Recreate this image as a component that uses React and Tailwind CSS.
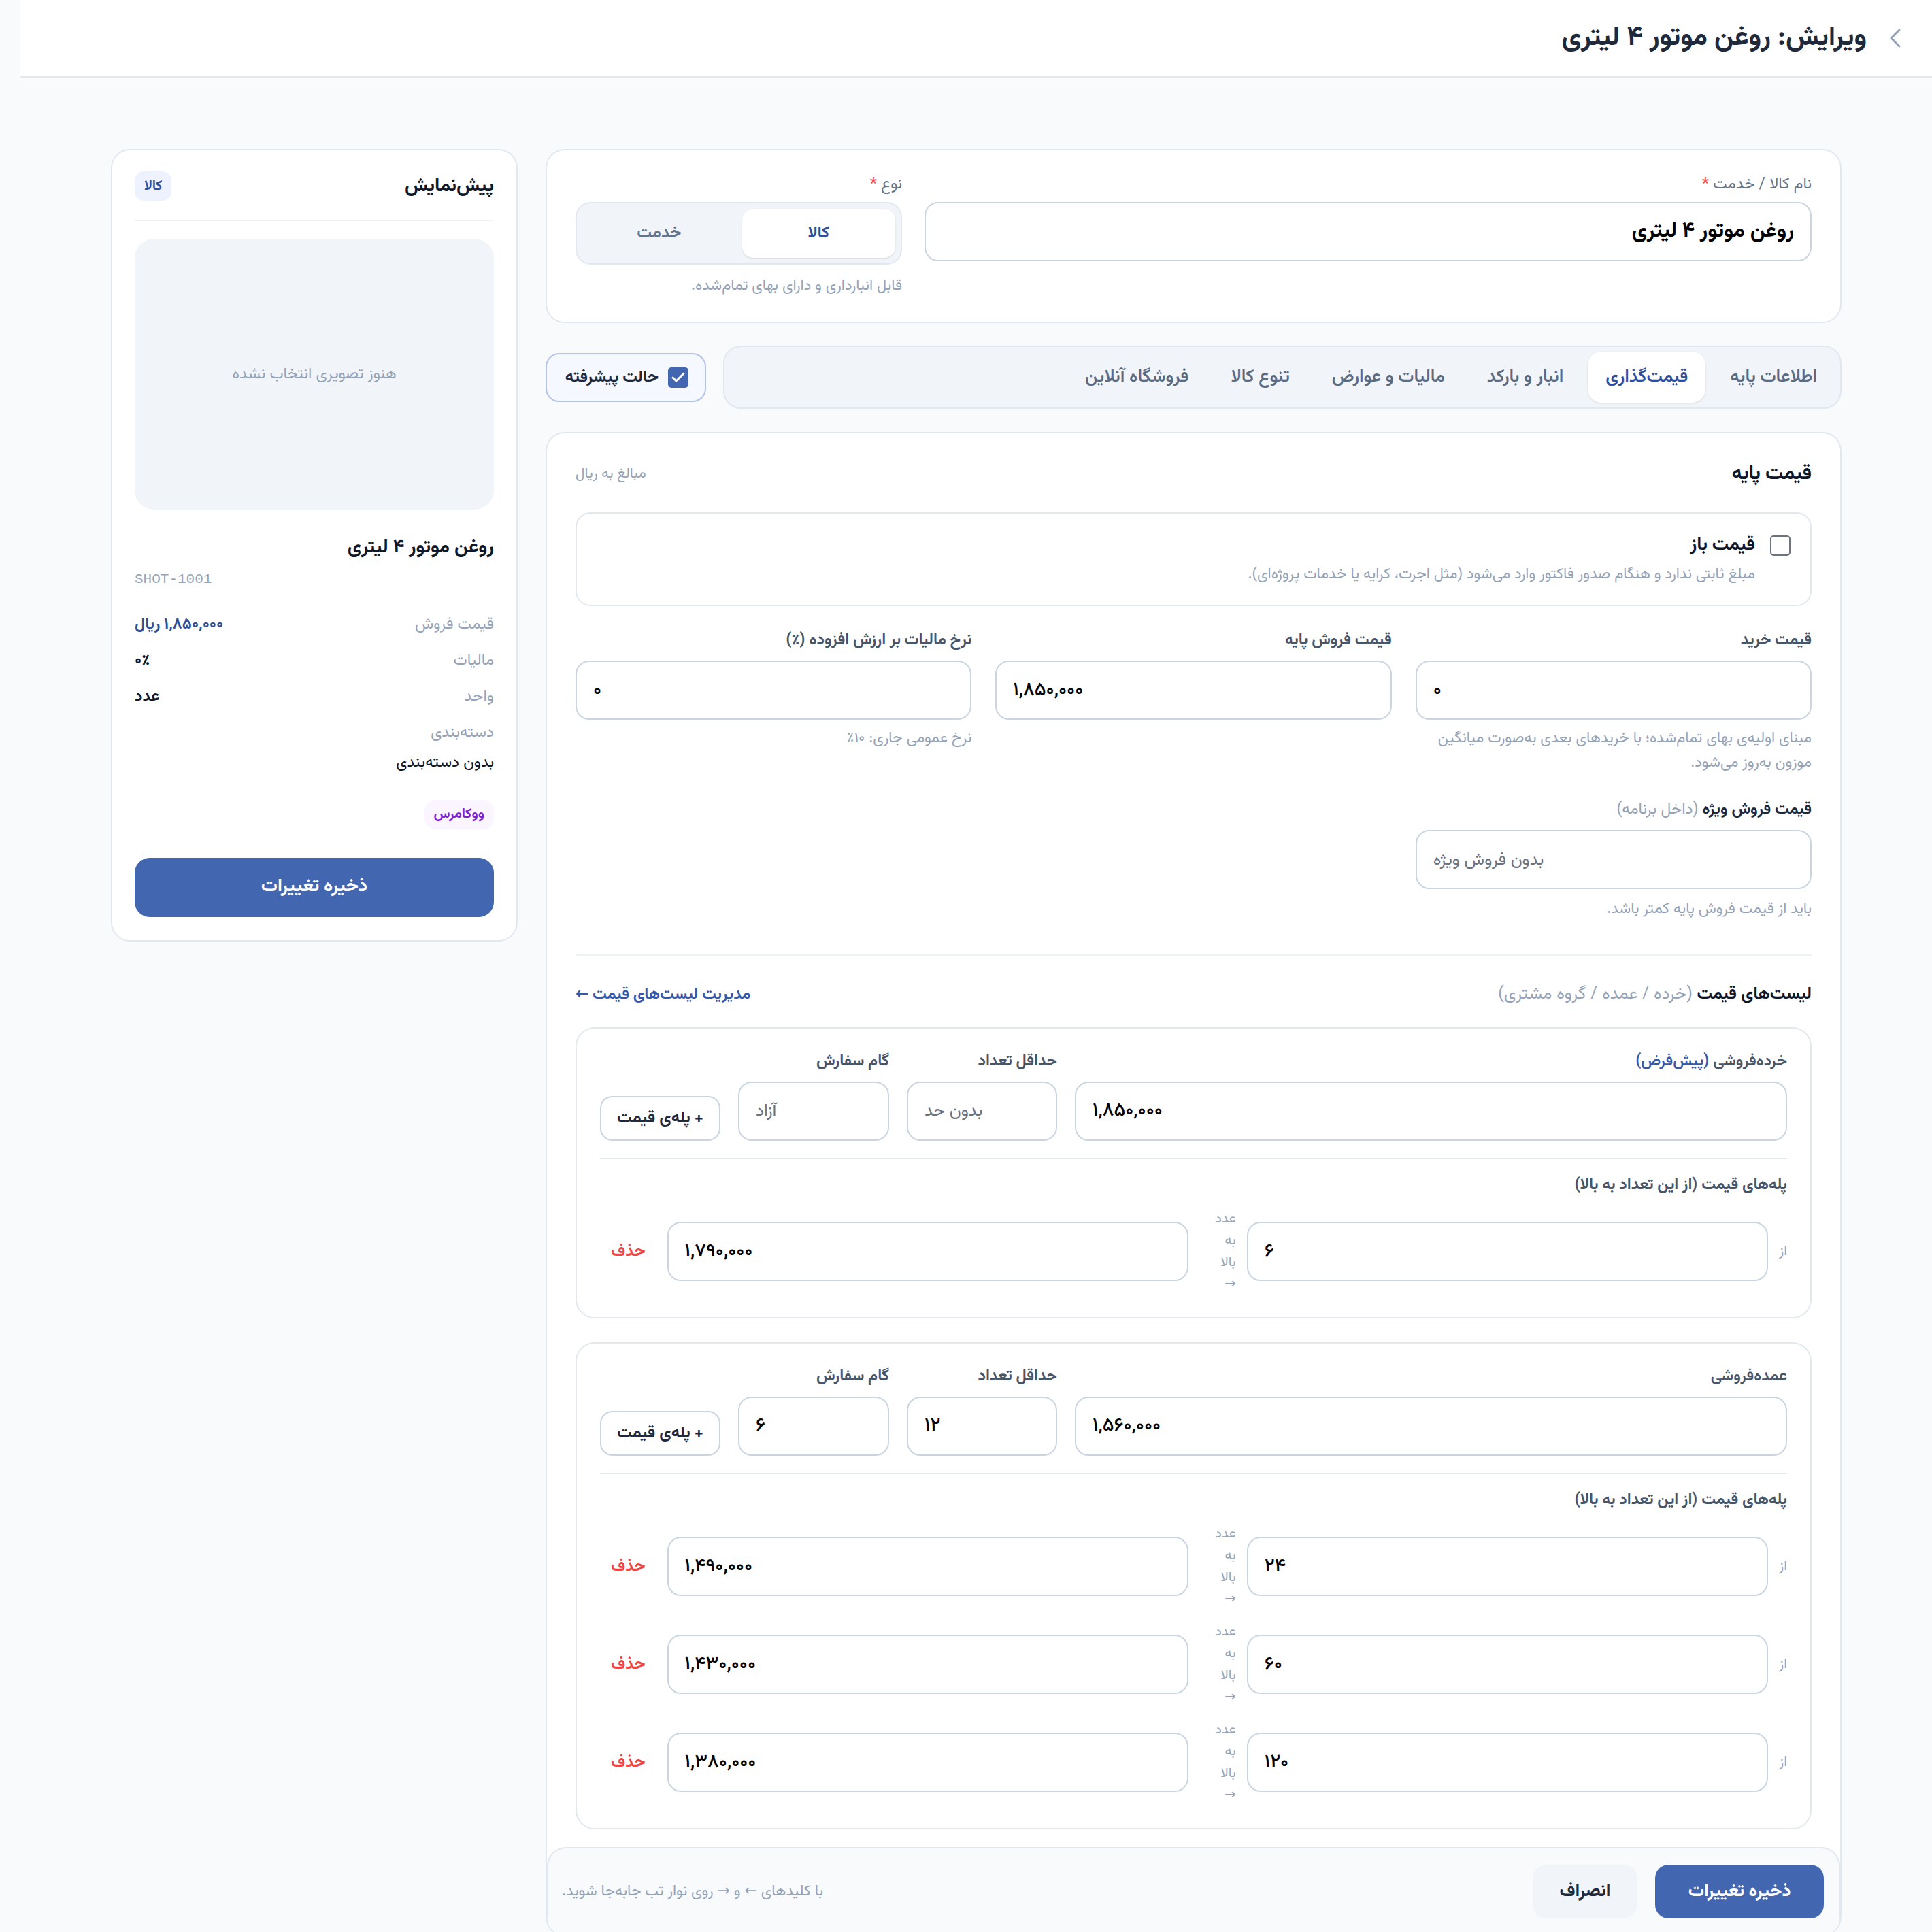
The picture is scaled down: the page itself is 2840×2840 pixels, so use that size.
import { Check, ChevronLeft } from "lucide-react";

const Field = ({ value, placeholder, className = "" }) => (
  <input
    dir="ltr"
    readOnly
    defaultValue={value}
    placeholder={placeholder}
    className={`h-[87px] w-full rounded-[20px] border-2 border-[#cbd5e1] bg-white px-[24px] text-left text-[28px] font-medium text-black outline-none placeholder:text-[25px] placeholder:font-normal placeholder:text-[#6b7280] ${className}`}
  />
);

const Label = ({ children, className = "" }) => (
  <div className={`mb-[14px] text-[23px] font-bold leading-[32px] text-[#475569] ${className}`}>
    {children}
  </div>
);

const Tier = ({ from, price }) => (
  <div className="flex items-center gap-[16px]">
    <span className="text-[21px] text-[#94a3b8]">از</span>
    <div className="flex-1">
      <Field value={from} />
    </div>
    <div className="ml-[14px] w-[40px] text-[20px] leading-[32px] text-[#94a3b8]">
      عدد به بالا →
    </div>
    <div className="flex-1">
      <Field value={price} />
    </div>
    <button className="px-[16px] text-[24px] font-bold text-[#ef4444]">حذف</button>
  </div>
);

const PriceList = ({ title, price, minQty, step, tiers }) => (
  <div className="rounded-[28px] border-2 border-[#e2e8f0] bg-white px-[34px] pb-[32px] pt-[32px]">
    <div className="flex items-end gap-[26px]">
      <div className="flex-1">
        <Label className="font-semibold">{title}</Label>
        <Field value={price} />
      </div>
      <div className="w-[221px]">
        <Label>حداقل تعداد</Label>
        <Field value={minQty} placeholder="بدون حد" />
      </div>
      <div className="w-[222px]">
        <Label>گام سفارش</Label>
        <Field value={step} placeholder="آزاد" />
      </div>
      <button className="h-[66px] w-[177px] rounded-[18px] border-2 border-[#cbd5e1] bg-white text-[24px] font-bold text-[#1e293b]">
        + پله‌ی قیمت
      </button>
    </div>
    <div className="mt-[25px] border-t-2 border-[#e2e8f0]" />
    <div className="mt-[22px] text-[23px] font-bold leading-[32px] text-[#475569]">
      پله‌های قیمت (از این تعداد به بالا)
    </div>
    <div className="mt-[18px] flex flex-col gap-[16px]">
      {tiers.map((t) => (
        <Tier key={t.from} from={t.from} price={t.price} />
      ))}
    </div>
  </div>
);

const tabs = [
  "اطلاعات پایه",
  "قیمت‌گذاری",
  "انبار و بارکد",
  "مالیات و عوارض",
  "تنوع کالا",
  "فروشگاه آنلاین",
];

const PreviewRow = ({ label, value }) => (
  <div className="flex items-center justify-between text-[23px] leading-[36px]">
    <span className="text-[#94a3b8]">{label}</span>
    <span className="font-bold text-[#0f172a]">{value}</span>
  </div>
);

export default function App() {
  return (
    <div
      dir="rtl"
      className="min-h-screen bg-[#f8fafc] font-['Vazirmatn','Noto_Sans_Arabic','DejaVu_Sans',sans-serif] text-[#0f172a]"
    >
      {/* Header */}
      <header className="ml-[30px] flex h-[114px] items-center gap-[18px] border-b-2 border-[#e5e7eb] bg-white pr-[30px]">
        <ChevronLeft size={48} strokeWidth={1.5} className="text-[#94a3b8]" />
        <h1 className="text-[40px] font-bold text-[#1e293b]">ویرایش: روغن موتور ۴ لیتری</h1>
      </header>

      <div className="ml-[30px] flex items-start gap-[41px] px-[133px] pt-[105px]">
        {/* Main column */}
        <main className="flex-1">
          {/* Name / type card */}
          <section className="flex gap-[33px] rounded-[28px] border-2 border-[#e2e8f0] bg-white px-[42px] pb-[36px] pt-[34px]">
            <div className="flex-1">
              <div className="mb-[10px] text-[23px] leading-[32px] text-[#64748b]">
                نام کالا / خدمت <span className="text-[#ef4444]">*</span>
              </div>
              <input
                readOnly
                defaultValue="روغن موتور ۴ لیتری"
                className="h-[87px] w-full rounded-[20px] border-2 border-[#cbd5e1] bg-white px-[24px] text-[31px] font-bold text-black outline-none"
              />
            </div>
            <div className="w-[480px]">
              <div className="mb-[10px] text-[23px] leading-[32px] text-[#64748b]">
                نوع <span className="text-[#ef4444]">*</span>
              </div>
              <div className="grid h-[92px] grid-cols-2 gap-[9px] rounded-[22px] border-2 border-[#e2e8f0] bg-[#f1f5f9] p-[8px]">
                <div className="flex items-center justify-center rounded-[16px] bg-white text-[24px] font-bold text-[#2f4f9a] shadow-sm">
                  کالا
                </div>
                <div className="flex items-center justify-center text-[24px] font-bold text-[#64748b]">
                  خدمت
                </div>
              </div>
              <div className="mt-[16px] text-[22px] leading-[32px] text-[#94a3b8]">
                قابل انبارداری و دارای بهای تمام‌شده.
              </div>
            </div>
          </section>

          {/* Tabs */}
          <div className="mt-[33px] flex items-center gap-[25px]">
            <nav className="flex h-[93px] flex-1 items-center gap-[10px] rounded-[26px] border-2 border-[#e2e8f0] bg-[#f1f5f9] p-[8px]">
              {tabs.map((t, i) => (
                <div
                  key={t}
                  className={
                    i === 1
                      ? "flex h-[75px] items-center rounded-[20px] bg-white px-[26px] text-[26px] font-semibold text-[#2f4f9a] shadow-sm"
                      : "flex h-[75px] items-center px-[26px] text-[26px] font-semibold text-[#5b6b82]"
                  }
                >
                  {t}
                </div>
              ))}
            </nav>
            <label className="flex h-[72px] w-[236px] items-center gap-[14px] rounded-[20px] border-2 border-[#b4c3e8] bg-[#f5f8ff] px-[24px]">
              <span className="flex h-[30px] w-[30px] items-center justify-center rounded-[5px] bg-[#4366b0]">
                <Check size={24} strokeWidth={3} className="text-white" />
              </span>
              <span className="text-[24px] font-bold text-[#1e293b]">حالت پیشرفته</span>
            </label>
          </div>

          {/* Pricing card */}
          <section className="mt-[34px] overflow-hidden rounded-[28px] border-2 border-[#e2e8f0] bg-white">
            <div className="px-[42px] pb-[26px] pt-[40px]">
              <div className="flex items-center justify-between">
                <h2 className="text-[29px] font-bold leading-[40px]">قیمت پایه</h2>
                <span className="text-[21px] text-[#94a3b8]">مبالغ به ریال</span>
              </div>

              <div className="mt-[36px] flex gap-[22px] rounded-[22px] border-2 border-[#e2e8f0] px-[29px] py-[28px]">
                <span className="mt-[4px] h-[30px] w-[30px] shrink-0 rounded-[5px] border-2 border-[#6b7280] bg-white" />
                <div>
                  <div className="text-[27px] font-bold leading-[38px]">قیمت باز</div>
                  <div className="mt-[8px] text-[22px] leading-[32px] text-[#94a3b8]">
                    مبلغ ثابتی ندارد و هنگام صدور فاکتور وارد می‌شود (مثل اجرت، کرایه یا خدمات پروژه‌ای).
                  </div>
                </div>
              </div>

              <div className="mt-[34px] grid grid-cols-3 gap-[35px]">
                <div>
                  <Label>قیمت خرید</Label>
                  <Field value="۰" />
                  <p className="mt-[10px] text-[22px] leading-[36px] text-[#94a3b8]">
                    مبنای اولیه‌ی بهای تمام‌شده؛ با خریدهای بعدی به‌صورت میانگین موزون به‌روز می‌شود.
                  </p>
                </div>
                <div>
                  <Label>قیمت فروش پایه</Label>
                  <Field value="۱,۸۵۰,۰۰۰" />
                </div>
                <div>
                  <Label>نرخ مالیات بر ارزش افزوده (٪)</Label>
                  <Field value="۰" />
                  <p className="mt-[10px] text-[22px] leading-[36px] text-[#94a3b8]">نرخ عمومی جاری: ۱۰٪</p>
                </div>
              </div>

              <div className="mt-[34px] grid grid-cols-3 gap-[35px]">
                <div>
                  <Label>
                    <span className="text-[#1e293b]">قیمت فروش ویژه</span>{" "}
                    <span className="font-normal text-[#94a3b8]">(داخل برنامه)</span>
                  </Label>
                  <Field placeholder="بدون فروش ویژه" />
                  <p className="mt-[12px] text-[22px] leading-[36px] text-[#94a3b8]">
                    باید از قیمت فروش پایه کمتر باشد.
                  </p>
                </div>
              </div>

              <div className="mt-[48px] border-t-2 border-[#eef2f6]" />

              <div className="mt-[40px] flex items-center justify-between">
                <div className="text-[25px] leading-[34px]">
                  <span className="font-bold text-[#0f172a]">لیست‌های قیمت</span>{" "}
                  <span className="text-[#94a3b8]">(خرده / عمده / گروه مشتری)</span>
                </div>
                <a className="text-[23px] font-bold text-[#3558a8]">مدیریت لیست‌های قیمت ←</a>
              </div>

              <div className="mt-[30px] flex flex-col gap-[35px]">
                <PriceList
                  title={
                    <>
                      خرده‌فروشی <span className="text-[#3558a8]">(پیش‌فرض)</span>
                    </>
                  }
                  price="۱,۸۵۰,۰۰۰"
                  tiers={[{ from: "۶", price: "۱,۷۹۰,۰۰۰" }]}
                />
                <PriceList
                  title="عمده‌فروشی"
                  price="۱,۵۶۰,۰۰۰"
                  minQty="۱۲"
                  step="۶"
                  tiers={[
                    { from: "۲۴", price: "۱,۴۹۰,۰۰۰" },
                    { from: "۶۰", price: "۱,۴۳۰,۰۰۰" },
                    { from: "۱۲۰", price: "۱,۳۸۰,۰۰۰" },
                  ]}
                />
              </div>
            </div>

            {/* Footer bar */}
            <footer className="flex items-center justify-between rounded-t-[28px] border-2 border-b-0 border-[#e2e8f0] bg-[#f8fafc] py-[24px] pl-[20px] pr-[22px]">
              <div className="flex items-center gap-[26px]">
                <button className="h-[79px] w-[248px] rounded-[20px] bg-[#4366b0] text-[26px] font-bold text-white">
                  ذخیره تغییرات
                </button>
                <button className="h-[79px] w-[154px] rounded-[20px] bg-[#f1f5f9] text-[26px] font-bold text-[#1e293b]">
                  انصراف
                </button>
              </div>
              <span className="text-[22px] text-[#94a3b8]">با کلیدهای ← و → روی نوار تب جابه‌جا شوید.</span>
            </footer>
          </section>
        </main>

        {/* Preview card */}
        <aside className="w-[598px] shrink-0 rounded-[28px] border-2 border-[#e2e8f0] bg-white px-[33px] pb-[34px] pt-[31px]">
          <div className="flex items-center justify-between border-b-2 border-[#eef2f6] pb-[28px]">
            <h2 className="text-[28px] font-bold">پیش‌نمایش</h2>
            <span className="flex h-[43px] items-center rounded-[14px] bg-[#eef2ff] px-[14px] text-[20px] font-bold text-[#2f4f9a]">
              کالا
            </span>
          </div>
          <div className="mt-[26px] flex h-[398px] items-center justify-center rounded-[28px] bg-[#f1f5f9] text-[23px] text-[#94a3b8]">
            هنوز تصویری انتخاب نشده
          </div>
          <div className="mt-[37px] text-[28px] font-bold leading-[38px]">روغن موتور ۴ لیتری</div>
          <div dir="ltr" className="mt-[12px] text-left font-['Liberation_Mono',monospace] text-[21px] text-[#94a3b8]">
            SHOT-1001
          </div>
          <div className="mt-[32px] flex flex-col gap-[17px]">
            <div className="flex items-center justify-between text-[23px] leading-[36px]">
              <span className="text-[#94a3b8]">قیمت فروش</span>
              <span className="font-bold text-[#2f4f9a]">۱,۸۵۰,۰۰۰ ریال</span>
            </div>
            <PreviewRow label="مالیات" value="۰٪" />
            <PreviewRow label="واحد" value="عدد" />
          </div>
          <div className="mt-[17px] text-[23px] leading-[36px] text-[#94a3b8]">دسته‌بندی</div>
          <div className="mt-[8px] text-[23px] leading-[36px] text-[#0f172a]">بدون دسته‌بندی</div>
          <div className="mt-[37px] flex">
            <span className="flex h-[43px] items-center rounded-[16px] bg-[#faf5ff] px-[14px] text-[20px] font-bold text-[#7e22ce]">
              ووکامرس
            </span>
          </div>
          <button className="mt-[42px] h-[87px] w-full rounded-[22px] bg-[#4366b0] text-[27px] font-bold text-white">
            ذخیره تغییرات
          </button>
        </aside>
      </div>
    </div>
  );
}
